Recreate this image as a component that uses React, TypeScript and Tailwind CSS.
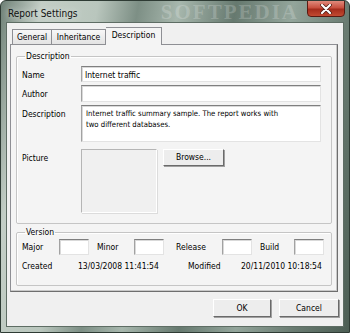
import React from "react";

const FONT = "[font-family:'DejaVu_Sans_Condensed','Liberation_Sans',sans-serif]";

function TextBox({ className = "", children }: { className?: string; children?: React.ReactNode }) {
  return (
    <div
      className={
        "border border-t-[#7f7f7f] border-l-[#a2a2a2] border-r-[#e3e3e3] border-b-[#e3e3e3] bg-white shadow-[inset_1px_1px_0_#d9d9d9] " +
        className
      }
    >
      {children}
    </div>
  );
}

function Button({ label, className = "" }: { label: string; className?: string }) {
  return (
    <div
      className={
        "flex items-center justify-center border border-t-white border-l-white border-r-[#6a6a6a] border-b-[#6a6a6a] bg-[#ededed] shadow-[1px_1px_0_#a0a0a0] text-black " +
        className
      }
    >
      {label}
    </div>
  );
}

export default function App() {
  return (
    <div
      className={`relative flex h-[333px] w-[350px] flex-col overflow-hidden rounded-t-[6px] border border-[#2e3b34] bg-[linear-gradient(100deg,#6f8177_0%,#c3cec6_10%,#b9c6bd_24%,#7d8f85_34%,#a7b7ad_44%,#66796f_58%,#93a59b_72%,#6a7c72_86%,#4c5e54_100%)] px-[5px] pb-[5px] text-[8.5px] ${FONT}`}
    >
      {/* title bar */}
      <div className="flex h-[21px] items-start">
        <div className="mt-[5px] pl-[2px] text-[10px] text-[#111] [text-shadow:0_0_6px_#e6ece8]">
          Report Settings
        </div>
        <div className="ml-auto mt-[1px] mr-[8px] font-['Liberation_Serif',serif] text-[21px] font-bold leading-[20px] tracking-[2px] text-white/20">
          SOFTPEDIA
        </div>
        <div className="-mt-px mr-[-1px] flex h-[17px] w-[38px] items-center justify-center rounded-b-[4px] border border-[#5a1a12] bg-[linear-gradient(#e08a7c_0%,#c8503f_45%,#a52c1c_55%,#c24a32_100%)]">
          <svg width="12" height="10" viewBox="0 0 12 10">
            <path d="M2 1 L10 9 M10 1 L2 9" stroke="#4a1a12" strokeWidth="3.6" strokeLinecap="round" />
            <path d="M2 1 L10 9 M10 1 L2 9" stroke="#ffffff" strokeWidth="2.2" strokeLinecap="round" />
          </svg>
        </div>
      </div>

      {/* client area */}
      <div className="flex flex-1 flex-col border border-[#5e6d64] bg-[#f0f0f0] pl-[3px] pr-[5px] pt-[4px]">
        {/* tabs */}
        <div className="relative z-10 ml-[2px] flex h-[17px] items-end">
          <div className="flex h-[15px] w-[40px] items-center justify-center border border-b-0 border-[#8e8f94] bg-[linear-gradient(#f7f7f7,#e3e3e3)] pt-px">
            General
          </div>
          <div className="flex h-[15px] w-[54px] items-center justify-center border border-b-0 border-l-0 border-[#8e8f94] bg-[linear-gradient(#f7f7f7,#e3e3e3)] pt-px">
            Inheritance
          </div>
          <div className="-mb-px flex h-[18px] w-[56px] items-center justify-center border border-b-0 border-l-0 border-[#8e8f94] bg-[#f4f4f4] pb-[2px]">
            Description
          </div>
        </div>

        {/* tab panel */}
        <div className="flex h-[248px] flex-col border border-t-[#8e8f94] border-l-[#8e8f94] border-r-[#6e6e6e] border-b-[#6e6e6e] bg-[#f4f4f4] px-[5px] pt-[6px] shadow-[inset_-1px_-1px_0_#c8c8c8]">
          <fieldset className="h-[173px] rounded-[2px] border border-[#c5c5c5] px-[5px] shadow-[inset_1px_1px_0_#fff]">
            <legend className="ml-[3px] px-[1px] leading-[11px]">Description</legend>
            <div className="mt-[4px] flex flex-col gap-[3px]">
              <div className="flex">
                <div className="w-[59px] pt-[3px]">Name</div>
                <TextBox className="h-[16px] w-[240px] pl-[3px] pt-[2px]">Internet traffic</TextBox>
              </div>
              <div className="flex">
                <div className="w-[59px] pt-[3px]">Author</div>
                <TextBox className="h-[17px] w-[240px]" />
              </div>
              <div className="flex">
                <div className="w-[59px] pt-[3px]">Description</div>
                <TextBox className="h-[37px] w-[240px] pl-[4px] pt-[2px] text-[7.7px] leading-[11px]">
                  Internet traffic summary sample. The report works with
                  <br />
                  two different databases.
                </TextBox>
              </div>
              <div className="mt-[4px] flex">
                <div className="w-[59px] pt-[3px]">Picture</div>
                <div className="h-[64px] w-[76px] border border-t-[#b5b5b5] border-l-[#b5b5b5] border-r-white border-b-white bg-[#f0f0f0] shadow-[1px_1px_0_#dcdcdc]" />
                <Button label="Browse..." className="ml-[6px] h-[17px] w-[61px]" />
              </div>
            </div>
          </fieldset>

          <fieldset className="mt-[3px] h-[59px] rounded-[2px] border border-[#c5c5c5] px-[5px] shadow-[inset_1px_1px_0_#fff]">
            <legend className="ml-[3px] px-[1px] leading-[11px]">Version</legend>
            <div className="mt-[1px] flex items-center">
              <div className="w-[37px]">Major</div>
              <TextBox className="h-[16px] w-[30px]" />
              <div className="ml-[8px] w-[37px]">Minor</div>
              <TextBox className="h-[16px] w-[30px]" />
              <div className="ml-[12px] w-[46px]">Release</div>
              <TextBox className="h-[16px] w-[30px]" />
              <div className="ml-[8px] w-[34px]">Build</div>
              <TextBox className="h-[16px] w-[30px]" />
            </div>
            <div className="mt-[5px] flex">
              <div className="w-[56px]">Created</div>
              <div className="w-[110px]">13/03/2008 11:41:54</div>
              <div className="w-[53px]">Modified</div>
              <div>20/11/2010 10:18:54</div>
            </div>
          </fieldset>
        </div>

        {/* buttons */}
        <div className="mr-[-1px] mt-[7px] flex justify-end gap-[8px]">
          <Button label="OK" className="h-[18px] w-[58px]" />
          <Button label="Cancel" className="h-[18px] w-[60px]" />
        </div>
      </div>
    </div>
  );
}
